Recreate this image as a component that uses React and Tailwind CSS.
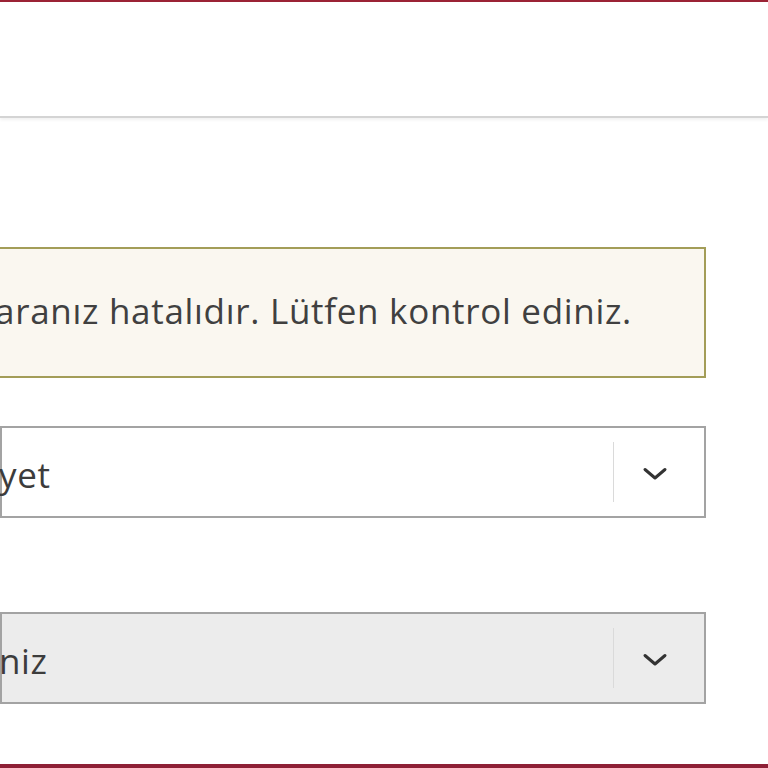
function Chevron() {
  return (
    <svg width="26" height="16" viewBox="0 0 26 16" fill="none" className="text-[#333]">
      <path d="M3 3.5 L13 12 L23 3.5" stroke="currentColor" strokeWidth="3" strokeLinecap="round" strokeLinejoin="round" />
    </svg>
  );
}

function SelectBox({ value, disabled }) {
  return (
    <div
      className={`flex h-[92px] items-center border-2 border-[#a3a3a3] ${
        disabled ? 'bg-[#ececec]' : 'bg-white'
      }`}
    >
      <span className="-ml-[3px] flex-1 pt-[4px] text-[35px] leading-none tracking-[0.6px] text-[#3c3c3c]">{value}</span>
      <div className="h-[60px] w-px bg-[#dadada]" />
      <div className="flex w-[90px] items-center justify-center pr-[8px] pt-[3px]">
        <Chevron />
      </div>
    </div>
  );
}

export default function App() {
  return (
    <div className="relative flex h-[768px] w-full flex-col overflow-hidden bg-white font-['Open_Sans',sans-serif]">
      <header className="h-[118px] shrink-0 border-t-2 border-b-2 border-t-[#9b2335] border-b-[#d4d4d4] bg-white shadow-[0_2px_3px_rgba(0,0,0,0.06)]" />

      <main className="flex flex-1 flex-col pr-[62px] pt-[129px]">
        <div className="flex h-[131px] items-center border-2 border-l-0 border-[#a39d58] bg-[#faf7f0]">
          <p className="-ml-[5px] whitespace-nowrap pb-[4px] text-[35px] leading-none tracking-[0.7px] text-[#404040]">
            aranız hatalıdır. Lütfen kontrol ediniz.
          </p>
        </div>

        <div className="mt-[48px]">
          <SelectBox value="yet" />
        </div>

        <div className="mt-[94px]">
          <SelectBox value="niz" disabled />
        </div>
      </main>

      <div className="h-[4px] shrink-0 bg-[#8e2036]" />
    </div>
  );
}
